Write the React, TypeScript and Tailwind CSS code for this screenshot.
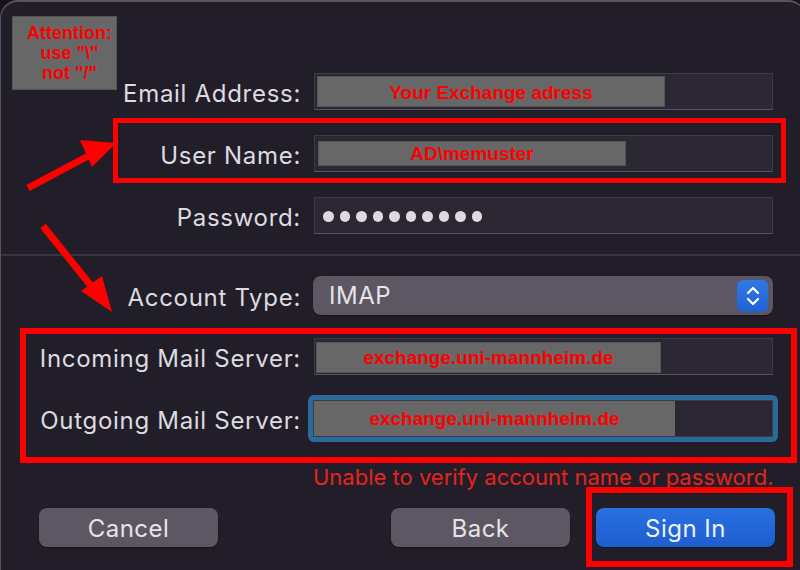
import React from "react";

const sans = { fontFamily: "Inter, 'Noto Sans', sans-serif" };
const arial = { fontFamily: "'Liberation Sans', Arial, sans-serif" };

function Label({ children }: { children: React.ReactNode }) {
  return (
    <div
      className="mt-[5px] w-[300px] shrink-0 text-right text-[24px] leading-none tracking-[0.7px] text-[#dddbe0]"
      style={sans}
    >
      {children}
    </div>
  );
}

export default function App() {
  return (
    <div className="relative h-[570px] w-[800px] overflow-hidden bg-[#16131a]">
      <div className="relative h-[572px] w-[806px] rounded-t-[18px] border-l border-t-2 border-[#58545e] bg-[#221e29]">
        <div className="flex flex-col pt-[71px]">
          {/* Email */}
          <div className="flex items-center">
            <Label>Email Address:</Label>
            <div className="ml-[13px] flex h-[37px] w-[459px] items-center border border-[#3d3945] border-b-[#57535e] bg-[#2c2833] p-[2px]">
              <div
                className="flex h-full w-[348px] items-center justify-center border border-[#555] bg-[#676767] pt-[3px] text-[19px] font-bold text-[#ff0000]"
                style={arial}
              >
                Your Exchange adress
              </div>
            </div>
          </div>
          {/* User */}
          <div className="mt-[25px] flex items-center">
            <Label>User Name:</Label>
            <div className="ml-[13px] flex h-[37px] w-[459px] items-center border border-[#3d3945] border-b-[#57535e] bg-[#2c2833] px-[3px] py-[5px]">
              <div
                className="flex h-full w-[308px] items-center justify-center border border-[#555] bg-[#676767] pt-[2px] text-[19px] font-bold text-[#ff0000]"
                style={arial}
              >
                AD\memuster
              </div>
            </div>
          </div>
          {/* Password */}
          <div className="mt-[25px] flex items-center">
            <Label>Password:</Label>
            <div className="ml-[13px] flex h-[37px] w-[459px] items-center gap-[6px] border border-[#3d3945] border-b-[#57535e] bg-[#2c2833] pl-[8px] pt-[2px]">
              {Array.from({ length: 10 }).map((_, i) => (
                <span key={i} className="h-[10.5px] w-[10.5px] rounded-full bg-[#dddbe0]" />
              ))}
            </div>
          </div>
          {/* Divider */}
          <div className="mt-[20px] h-[2px] bg-[#38343f]" />
          {/* Account Type */}
          <div className="mt-[20px] flex items-center">
            <Label>Account Type:</Label>
            <div className="ml-[12px] flex h-[39px] w-[460px] items-center justify-between rounded-[8px] bg-[#5c5762] pl-[16px] pr-[5px] shadow-[0_1px_1px_rgba(0,0,0,0.4)]">
              <span className="mt-[1px] text-[24px] leading-none tracking-[0.5px] text-[#e6e4e8]" style={sans}>
                IMAP
              </span>
              <div className="flex h-[32px] w-[31px] items-center justify-center rounded-[6px] bg-gradient-to-b from-[#3179e6] to-[#2162d2]">
                <svg width="16" height="24" viewBox="0 0 16 24" fill="none" stroke="#ffffff" strokeWidth="2.2" strokeLinecap="round" strokeLinejoin="round">
                  <path d="M3 9 L8 4 L13 9" />
                  <path d="M3 15 L8 20 L13 15" />
                </svg>
              </div>
            </div>
          </div>
          {/* Incoming */}
          <div className="mt-[23px] flex items-center">
            <Label>Incoming Mail Server:</Label>
            <div className="ml-[13px] flex h-[37px] w-[459px] items-end border border-[#3d3945] border-b-[#57535e] bg-[#2c2833] pb-[1px] pl-[1px]">
              <div
                className="flex h-[31px] w-[345px] items-center justify-center border border-[#555] bg-[#676767] pt-[2px] text-[19px] font-bold text-[#ff0000]"
                style={arial}
              >
                exchange.uni-mannheim.de
              </div>
            </div>
          </div>
          {/* Outgoing */}
          <div className="mt-[20px] flex items-center">
            <Label>Outgoing Mail Server:</Label>
            <div className="ml-[7px] rounded-[6px] bg-[#2a6a9a] p-[5px]">
              <div className="flex h-[37px] w-[460px] items-stretch border border-[#3d3945] bg-[#2c2833]">
                <div
                  className="flex w-[361px] items-center justify-center bg-[#676767] pt-[2px] text-[19px] font-bold text-[#ff0000]"
                  style={arial}
                >
                  exchange.uni-mannheim.de
                </div>
              </div>
            </div>
          </div>
          {/* Error */}
          <div className="mt-[22px] pl-[312px] text-[22px] leading-[26px] text-[#e5241d]" style={sans}>
            Unable to verify account name or password.
          </div>
          {/* Buttons */}
          <div className="mt-[18px] flex items-center pl-[38px]" style={sans}>
            <div className="flex h-[39px] w-[179px] items-center justify-center rounded-[8px] bg-[#5c5762] pt-[2px] text-[24px] tracking-[0.5px] text-[#e6e4e8] shadow-[0_1px_1px_rgba(0,0,0,0.4)]">
              Cancel
            </div>
            <div className="ml-[173px] flex h-[39px] w-[179px] items-center justify-center rounded-[8px] bg-[#5c5762] pt-[2px] text-[24px] tracking-[0.5px] text-[#e6e4e8] shadow-[0_1px_1px_rgba(0,0,0,0.4)]">
              Back
            </div>
            <div className="ml-[26px] flex h-[39px] w-[179px] items-center justify-center rounded-[8px] bg-gradient-to-b from-[#2a6fe0] to-[#1e5ed0] pt-[2px] text-[24px] tracking-[0.5px] text-[#eef2fb] shadow-[0_1px_1px_rgba(0,0,0,0.4)]">
              Sign In
            </div>
          </div>
        </div>
      </div>

      {/* Annotations */}
      <div
        className="absolute left-[12px] top-[16px] flex h-[74px] w-[105px] flex-col items-center justify-center border border-[#555] bg-[#676767] pl-[10px] text-center text-[18px] font-bold leading-[20px] text-[#ff0000]"
        style={arial}
      >
        <span>Attention:</span>
        <span>use "\"</span>
        <span>not "/"</span>
      </div>
      <div className="absolute left-[113px] top-[118px] h-[65px] w-[673px] border-[5px] border-[#ff0000]" />
      <div className="absolute left-[20px] top-[328px] h-[135px] w-[777px] border-[6px] border-[#ff0000]" />
      <div className="absolute left-[586px] top-[487px] h-[80px] w-[207px] border-[6px] border-[#ff0000]" />
      <svg className="absolute left-0 top-0" width="800" height="570" viewBox="0 0 800 570">
        <line x1="28" y1="188" x2="92" y2="154" stroke="#ff0000" strokeWidth="7" />
        <polygon points="116,143 80,140 92,167" fill="#ff0000" />
        <line x1="43" y1="226" x2="96" y2="292" stroke="#ff0000" strokeWidth="7" />
        <polygon points="112,312 81,291 102,276" fill="#ff0000" />
      </svg>
    </div>
  );
}
